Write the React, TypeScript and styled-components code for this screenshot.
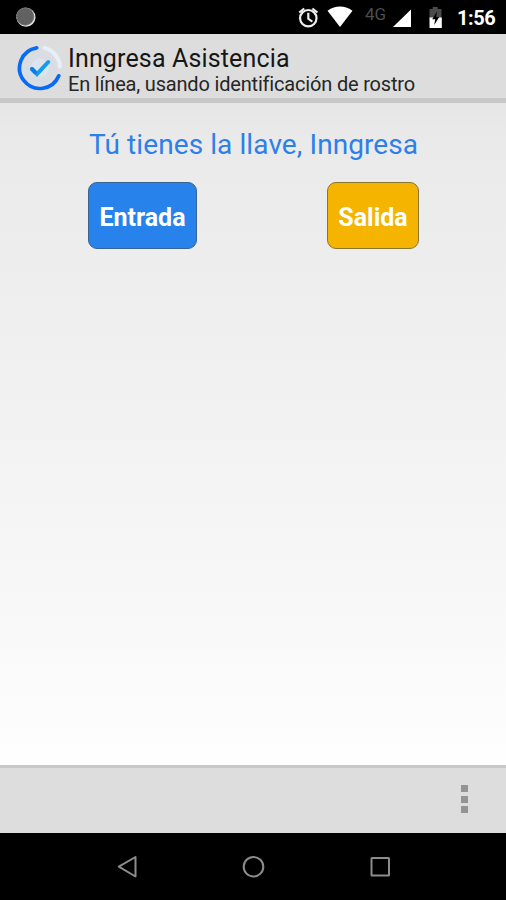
import React from "react";
import styled, { createGlobalStyle } from "styled-components";

const GlobalStyle = createGlobalStyle`
  * { box-sizing: border-box; }
  body { margin: 0; background: #000; font-family: Roboto, "Liberation Sans", sans-serif; }
`;

const Screen = styled.div`
  width: 506px;
  height: 900px;
  display: flex;
  flex-direction: column;
  overflow: hidden;
  background: #000;
`;

const StatusBar = styled.header`
  height: 34px;
  flex: none;
  display: flex;
  justify-content: space-between;
  background: #000;
  svg { display: block; }
`;

const StatusGroup = styled.div`
  display: flex;
`;

const Network = styled.span`
  width: 26px;
  margin-left: 11px;
  padding-top: 5px;
  font-size: 17px;
  line-height: 18px;
  color: #4d4d4d;
`;

const Clock = styled.time`
  width: 49px;
  padding-top: 6px;
  font-size: 20px;
  font-weight: 700;
  line-height: 24px;
  letter-spacing: -0.45px;
  color: #fff;
`;

const AppBar = styled.div`
  height: 64px;
  flex: none;
  display: flex;
  padding-left: 17px;
  background: #dddddd;
  svg { display: block; margin-top: 10px; }
`;

const Titles = styled.div`
  padding: 10px 0 0 5px;
  color: #161616;
  white-space: nowrap;
`;

const Title = styled.h1`
  margin: 0;
  font-size: 25px;
  font-weight: 400;
  line-height: 29px;
  letter-spacing: 0.15px;
`;

const Subtitle = styled.p`
  margin: 0;
  font-size: 20px;
  line-height: 22px;
  letter-spacing: -0.18px;
  font-variant-ligatures: none;
  color: #262626;
`;

const Divider = styled.div<{ $height: number }>`
  height: ${(p) => p.$height}px;
  flex: none;
  background: #c8c8c8;
`;

const Content = styled.main`
  flex: 1;
  padding-top: 26px;
  background: linear-gradient(#e6e6e6 0, #eaeaea 40px, #eeeeee 180px, #f5f5f5 420px, #fefefe 100%);
`;

const Slogan = styled.p`
  margin: 0 0 21px;
  padding-left: 89px;
  font-size: 28px;
  line-height: 32px;
  letter-spacing: 0.09px;
  color: #2c80ea;
  white-space: nowrap;
`;

const Actions = styled.div`
  display: flex;
  justify-content: space-between;
  padding: 0 87px 0 88px;
`;

const ActionButton = styled.button<{ $width: number; $color: string; $border: string }>`
  width: ${(p) => p.$width}px;
  height: 67px;
  padding: 3px 0 0;
  border: 1px solid ${(p) => p.$border};
  border-radius: 9px;
  background: ${(p) => p.$color};
  color: #fff;
  font: 700 25px Roboto, sans-serif;
  white-space: nowrap;
`;

const BottomBar = styled.footer`
  height: 65px;
  flex: none;
  display: flex;
  justify-content: flex-end;
  align-items: flex-start;
  padding: 17px 38px 0 0;
  background: #dddddd;
`;

const MenuDots = styled.button`
  display: flex;
  flex-direction: column;
  justify-content: space-between;
  width: 7px;
  height: 28px;
  padding: 0;
  border: 0;
  background: transparent;
`;

const Dot = styled.span`
  width: 7px;
  height: 7px;
  background: #949494;
`;

const Navigation = styled.nav`
  height: 67px;
  flex: none;
  background: #000;
  svg { display: block; }
`;

export default function App() {
  return (
    <>
      <GlobalStyle />
      <Screen>
        <StatusBar>
          <svg width="50" height="34" viewBox="0 0 50 34">
            <circle cx="26" cy="17.3" r="9.5" fill="#e8e8e8" />
            <circle cx="25.2" cy="16.5" r="9" fill="#616161" />
            <circle cx="25.2" cy="16.5" r="8.5" fill="none" stroke="#858585" strokeDasharray="2 1" />
          </svg>
          <StatusGroup>
            <svg width="56" height="34" viewBox="298 0 56 34">
              <g fill="none" stroke="#eee" strokeWidth="2.2">
                <circle cx="308.3" cy="18.2" r="8.2" />
                <path d="M308.3 12.8v6l4 2.8M299.2 12.5l5-4M317.4 12.5l-5-4" />
              </g>
              <path d="M327.5 10.7Q340 2.5 352.5 10.7L340 27Z" fill="#fff" />
            </svg>
            <Network>4G</Network>
            <svg width="66" height="34" viewBox="391 0 66 34">
              <path d="M411 9.5V27h-18Z" fill="#fff" />
              <path d="M429.5 9h3.2V7h5v2h3.8v9h-12Z" fill="#4b4b4b" />
              <path d="M429.5 17.5h12.3V28h-12.3Z" fill="#fff" />
              <path d="M437 11.5l-4.8 7.8h3l-1 5.8 5-8h-3Z" fill="#000" />
            </svg>
            <Clock>1:56</Clock>
          </StatusGroup>
        </StatusBar>
        <AppBar>
          <svg width="46" height="48" viewBox="17 44 46 48" fill="none" strokeLinecap="round">
            <circle cx="40" cy="68" r="16" fill="#d8dde4" />
            <circle cx="40" cy="67.5" r="9" fill="#dbe5ed" />
            <path d="M44.5 47.9A20.5 20.5 0 0 1 60 66.5" stroke="#e8effc" strokeWidth="4" />
            <path d="M36.7 47.9A20.4 20.4 0 1 0 58.8 75.8" stroke="#086bf7" strokeWidth="3.7" />
            <path d="M32 69l5 5.2L48.2 62" stroke="#159bed" strokeWidth="4" />
            <path d="M32 69l3 3.2" stroke="#087df2" strokeWidth="4" />
          </svg>
          <Titles>
            <Title>Inngresa Asistencia</Title>
            <Subtitle>En línea, usando identificación de rostro</Subtitle>
          </Titles>
        </AppBar>
        <Divider $height={5} />
        <Content>
          <Slogan>Tú tienes la llave, Inngresa</Slogan>
          <Actions>
            <ActionButton $width={109} $color="#2782ec" $border="#376494">Entrada</ActionButton>
            <ActionButton $width={92} $color="#f4b400" $border="#887635">Salida</ActionButton>
          </Actions>
        </Content>
        <Divider $height={3} />
        <BottomBar>
          <MenuDots aria-label="Menú"><Dot /><Dot /><Dot /></MenuDots>
        </BottomBar>
        <Navigation>
          <svg width="506" height="67" viewBox="0 833 506 67" fill="none" stroke="#8c8c8c" strokeWidth="2" strokeLinejoin="round">
            <path d="M135.5 857v19.5L118.8 866.7Z" />
            <circle cx="253.5" cy="866.7" r="9.8" />
            <rect x="371.5" y="858" width="17.5" height="17.5" rx=".5" />
          </svg>
        </Navigation>
      </Screen>
    </>
  );
}
